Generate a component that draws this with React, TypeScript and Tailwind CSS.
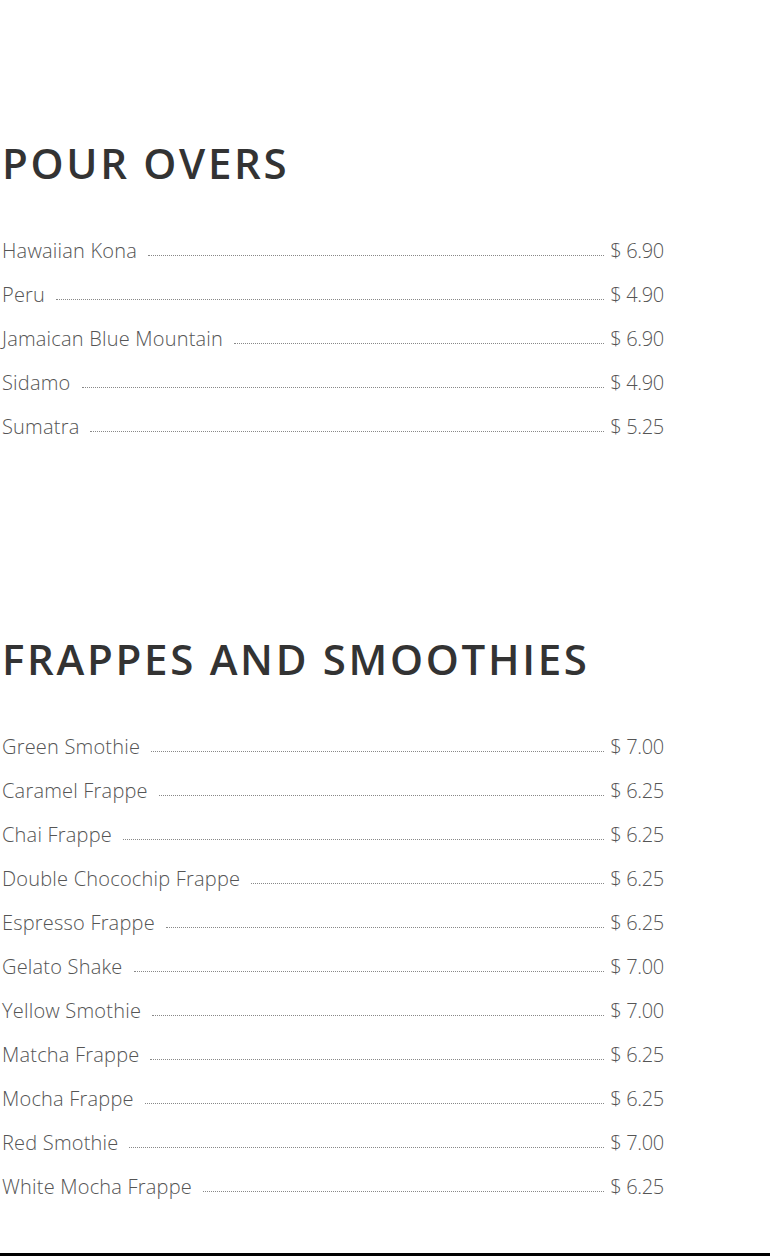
const pourOvers = [
  { name: 'Hawaiian Kona', price: '6.90' },
  { name: 'Peru', price: '4.90' },
  { name: 'Jamaican Blue Mountain', price: '6.90' },
  { name: 'Sidamo', price: '4.90' },
  { name: 'Sumatra', price: '5.25' },
];

const frappes = [
  { name: 'Green Smothie', price: '7.00' },
  { name: 'Caramel Frappe', price: '6.25' },
  { name: 'Chai Frappe', price: '6.25' },
  { name: 'Double Chocochip Frappe', price: '6.25' },
  { name: 'Espresso Frappe', price: '6.25' },
  { name: 'Gelato Shake', price: '7.00' },
  { name: 'Yellow Smothie', price: '7.00' },
  { name: 'Matcha Frappe', price: '6.25' },
  { name: 'Mocha Frappe', price: '6.25' },
  { name: 'Red Smothie', price: '7.00' },
  { name: 'White Mocha Frappe', price: '6.25' },
];

interface MenuSectionProps {
  title: string;
  items: { name: string; price: string }[];
}

const MenuSection = ({ title, items }: MenuSectionProps) => (
  <section>
    <h2 className="text-[42px] leading-[50px] font-semibold tracking-[2.7px] text-[#333] uppercase mb-[40px]">
      {title}
    </h2>
    <ul className="w-[662px]">
      {items.map(({ name, price }) => (
        <li key={name} className="flex items-end text-[20px] leading-[44px] font-light text-[#555] pt-px -mb-px">
          <span className="tracking-[0.2px]">{name}</span>
          <span className="flex-1 h-px border-b border-dotted border-[#888] ml-[11px] mr-[6px] mb-[17px]"></span>
          <span className="tracking-[-0.3px]">$ {price}</span>
        </li>
      ))}
    </ul>
  </section>
);

export default function App() {
  return (
    <div className="bg-white min-h-[1256px] font-['Open_Sans',sans-serif]">
      <div className="pt-[138px] pb-[45px] pl-[2px] flex flex-col gap-[186px]">
        <MenuSection title="Pour Overs" items={pourOvers} />
        <MenuSection title="Frappes and Smoothies" items={frappes} />
      </div>
      <div className="h-[4px] bg-black"></div>
    </div>
  );
}
